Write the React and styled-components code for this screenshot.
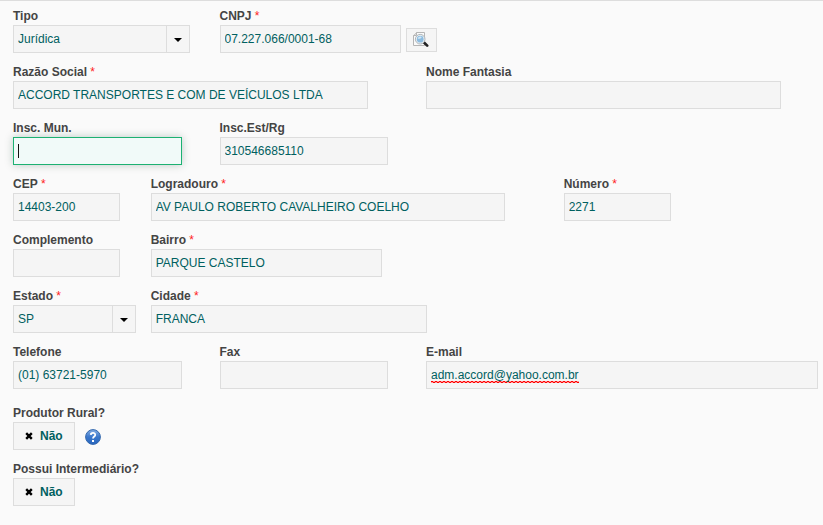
import React from "react";
import styled, { createGlobalStyle, css } from "styled-components";

const GlobalStyle = createGlobalStyle`
  *, *::before, *::after { box-sizing: border-box; }
  body {
    margin: 0;
    background: #fafafa;
    color: #444;
    font: 12px/16px "Liberation Sans", Arial, Helvetica, sans-serif;
  }
`;

const Page = styled.main`
  border-top: 1px solid #ddd;
  padding: 7px 5px 18px 13px;
`;

const Form = styled.form`
  display: flex;
  flex-direction: column;
  gap: 11px;
`;

const Row = styled.div`
  display: grid;
  grid-template-columns: repeat(12, minmax(0, 1fr));
  column-gap: 21px;
  margin-top: ${({ $spaced }) => ($spaced ? "5px" : "0")};
`;

const Field = styled.div`
  grid-column: span ${({ $span }) => $span};
  display: flex;
  flex-direction: column;
  gap: 1px;
`;

const Label = styled.label`
  font-weight: bold;
  white-space: nowrap;
`;

const Required = styled.span`
  color: #f22;
  font-weight: normal;
`;

const control = css`
  height: 28px;
  margin: 0;
  padding: 0 4px;
  border: 1px solid #ddd;
  border-radius: 0;
  background: #f5f5f5;
  color: #006060;
  font: inherit;
  outline: none;
`;

const Input = styled.input`
  ${control}
  width: ${({ $width }) => $width || "calc(90% + 2px)"};
  min-width: 0;

  &:focus {
    border-color: #1cb172;
    background: #f1faf9 linear-gradient(#111, #111) 4px 6px / 1px 14px no-repeat;
    caret-color: transparent;
    box-shadow: 0 0 8px rgba(0, 60, 40, 0.25);
  }
`;

const EmailInput = styled(Input)`
  background-image:
    repeating-linear-gradient(90deg, #f00 0 2px, #f99 2px 4px),
    repeating-linear-gradient(90deg, #f99 0 2px, #f00 2px 4px);
  background-position: 4px 19px, 4px 20px;
  background-size: 148px 1px;
  background-repeat: no-repeat;
`;

const SelectBox = styled.div`
  display: grid;
  grid-template-columns: minmax(0, 1fr) 24px;
  width: ${({ $width }) => $width};
`;

const Select = styled.select`
  ${control}
  grid-area: 1 / 1 / 2 / 3;
  appearance: none;
  width: 100%;
`;

const Arrow = styled.span`
  grid-area: 1 / 2;
  display: grid;
  place-items: center;
  padding-top: 2px;
  border-left: 1px solid #ddd;
  border-right: 1px solid #ddd;
  pointer-events: none;
`;

const Inline = styled.div`
  display: flex;
  align-items: center;
  gap: ${({ $gap }) => $gap};
  width: ${({ $width }) => $width || "auto"};
`;

const SearchButton = styled.button`
  display: grid;
  place-items: center;
  align-self: flex-end;
  flex: none;
  width: 31px;
  height: 24px;
  margin-bottom: 1px;
  padding: 0;
  border: 1px solid #ddd;
  background: #f5f5f5;
`;

const Toggle = styled.button`
  ${control}
  display: flex;
  align-items: center;
  gap: 7px;
  width: 62px;
  padding: 0 11px;
  font-weight: bold;
`;

const HelpButton = styled.button`
  display: grid;
  width: 16px;
  height: 16px;
  margin-top: 2px;
  padding: 0;
  border: 0;
  background: none;
`;

function SearchIcon() {
  return (
    <svg width="16" height="16" viewBox="0 0 16 16" aria-hidden="true">
      <path d="M3.5 .5h8v13H.5v-10z" fill="#fafafa" stroke="#b5b5b5" />
      <path d="M.5 3.5h3v-3" fill="#ddd" stroke="#b5b5b5" />
      <path d="M11 10.5l3.2 3.2" stroke="#222" strokeWidth="2.6" strokeLinecap="round" />
      <circle cx="7.2" cy="7.2" r="4.8" fill="#eef3f6" stroke="#aeb5ba" />
      <circle cx="7.2" cy="7.2" r="3.4" fill="#8dbce0" />
      <path d="M4.7 6.7a2.7 2.7 0 0 1 4.2-1.8c-.7 1.5-2.4 2-4.2 1.8z" fill="#d2e7f5" />
    </svg>
  );
}

function HelpIcon() {
  return (
    <svg width="16" height="16" viewBox="0 0 16 16" aria-hidden="true">
      <defs>
        <linearGradient id="helpFill" x1="0" y1="0" x2="0" y2="1">
          <stop offset="0" stopColor="#86aee3" />
          <stop offset=".5" stopColor="#3b78cc" />
          <stop offset="1" stopColor="#2866be" />
        </linearGradient>
      </defs>
      <circle cx="8" cy="8" r="7.4" fill="url(#helpFill)" stroke="#3569ad" />
      <path d="M5.8 5.9C5.9 3.2 10.3 3.3 10.2 5.9C10.2 7.6 8 7.5 8 9.5" fill="none" stroke="#fff" strokeWidth="1.8" />
      <rect x="7" y="11" width="2" height="2" fill="#fff" />
    </svg>
  );
}

function CrossIcon() {
  return (
    <svg width="8" height="8" viewBox="0 0 8 8" aria-hidden="true">
      <path d="M1.2 1.2l5.6 5.6M6.8 1.2L1.2 6.8" stroke="#000" strokeWidth="2.4" />
    </svg>
  );
}

function FieldLabel({ id, required, children }) {
  return (
    <Label htmlFor={id}>
      {children}
      {required && <Required> *</Required>}
    </Label>
  );
}

function TextField({ id, label, span, value = "", required, width, autoFocus }) {
  return (
    <Field $span={span}>
      <FieldLabel id={id} required={required}>{label}</FieldLabel>
      <Input id={id} defaultValue={value} $width={width} autoFocus={autoFocus} required={required} autoComplete="off" />
    </Field>
  );
}

function SelectField({ id, label, span, options, required, width }) {
  return (
    <Field $span={span}>
      <FieldLabel id={id} required={required}>{label}</FieldLabel>
      <SelectBox $width={width}>
        <Select id={id}>
          {options.map((option) => <option key={option}>{option}</option>)}
        </Select>
        <Arrow>
          <svg width="8" height="4" viewBox="0 0 8 4" aria-hidden="true">
            <path d="M0 0h8L4 4z" fill="#000" />
          </svg>
        </Arrow>
      </SelectBox>
    </Field>
  );
}

function ToggleField({ id, label, help }) {
  return (
    <Field $span={12}>
      <FieldLabel id={id}>{label}</FieldLabel>
      <Inline $gap="10px">
        <Toggle id={id} type="button" aria-pressed="false"><CrossIcon />Não</Toggle>
        {help && <HelpButton type="button" aria-label="Ajuda"><HelpIcon /></HelpButton>}
      </Inline>
    </Field>
  );
}

export default function App() {
  return (
    <>
      <GlobalStyle />
      <Page>
        <Form>
          <Row>
            <SelectField id="tipo" label="Tipo" span={3} width="calc(95% + 1px)" options={["Jurídica", "Física"]} />
            <Field $span={4}>
              <FieldLabel id="cnpj" required>CNPJ</FieldLabel>
              <Inline $gap="5px" $width="calc(85% + 1px)">
                <Input id="cnpj" defaultValue="07.227.066/0001-68" $width="100%" />
                <SearchButton type="button" aria-label="Pesquisar"><SearchIcon /></SearchButton>
              </Inline>
            </Field>
          </Row>
          <Row>
            <TextField id="razao" label="Razão Social" span={6} value="ACCORD TRANSPORTES E COM DE VEÍCULOS LTDA" required />
            <TextField id="fantasia" label="Nome Fantasia" span={6} />
          </Row>
          <Row>
            <TextField id="inscMun" label="Insc. Mun." span={3} autoFocus />
            <TextField id="inscEst" label="Insc.Est/Rg" span={3} value="310546685110" />
          </Row>
          <Row>
            <TextField id="cep" label="CEP" span={2} value="14403-200" required />
            <TextField id="logradouro" label="Logradouro" span={6} value="AV PAULO ROBERTO CAVALHEIRO COELHO" required />
            <TextField id="numero" label="Número" span={2} value="2271" required />
          </Row>
          <Row>
            <TextField id="complemento" label="Complemento" span={2} />
            <TextField id="bairro" label="Bairro" span={4} value="PARQUE CASTELO" required />
          </Row>
          <Row>
            <SelectField id="estado" label="Estado" span={2} width="calc(105% + 1px)" options={["SP", "MG", "RJ"]} required />
            <TextField id="cidade" label="Cidade" span={5} width="calc(85% + 2px)" value="FRANCA" required />
          </Row>
          <Row>
            <TextField id="telefone" label="Telefone" span={3} value="(01) 63721-5970" />
            <TextField id="fax" label="Fax" span={3} />
            <Field $span={6}>
              <FieldLabel id="email">E-mail</FieldLabel>
              <EmailInput id="email" type="email" defaultValue="adm.accord@yahoo.com.br" $width="100%" />
            </Field>
          </Row>
          <Row $spaced>
            <ToggleField id="produtor" label="Produtor Rural?" help />
          </Row>
          <Row>
            <ToggleField id="intermediario" label="Possui Intermediário?" />
          </Row>
        </Form>
      </Page>
    </>
  );
}
